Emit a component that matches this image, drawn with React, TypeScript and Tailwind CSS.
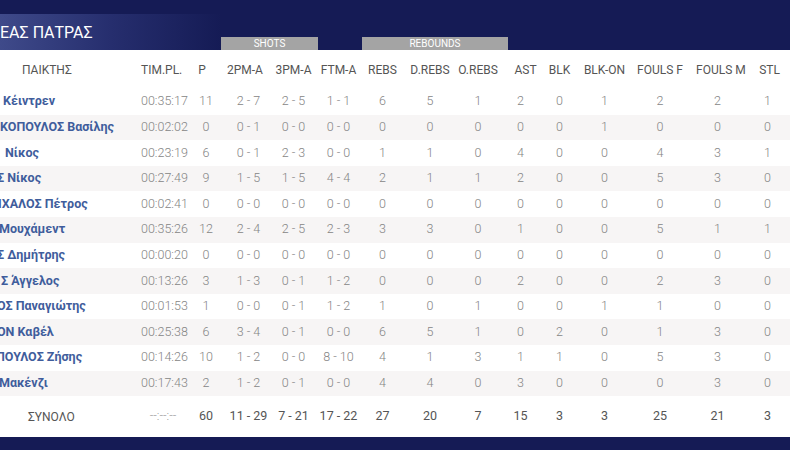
import React from 'react'

type Row = {
  name: string
  shift: string
  stats: string[]
}

const rows: Row[] = [
  { name: 'Κέιντρεν', shift: 'pl-[3px]', stats: ['00:35:17', '11', '2 - 7', '2 - 5', '1 - 1', '6', '5', '1', '2', '0', '1', '2', '2', '1'] },
  { name: 'ΚΟΠΟΥΛΟΣ Βασίλης', shift: 'pl-0', stats: ['00:02:02', '0', '0 - 1', '0 - 0', '0 - 0', '0', '0', '0', '0', '0', '1', '0', '0', '0'] },
  { name: 'Νίκος', shift: 'pl-[5px]', stats: ['00:23:19', '6', '0 - 1', '2 - 3', '0 - 0', '1', '1', '0', '4', '0', '0', '4', '3', '1'] },
  { name: 'Σ Νίκος', shift: '-ml-[3px]', stats: ['00:27:49', '9', '1 - 5', '1 - 5', '4 - 4', '2', '1', '1', '2', '0', '0', '5', '3', '0'] },
  { name: 'ΙΧΑΛΟΣ Πέτρος', shift: '-ml-[2px]', stats: ['00:02:41', '0', '0 - 0', '0 - 0', '0 - 0', '0', '0', '0', '0', '0', '0', '0', '0', '0'] },
  { name: 'Μουχάμεντ', shift: '-ml-[1px]', stats: ['00:35:26', '12', '2 - 4', '2 - 5', '2 - 3', '3', '3', '0', '1', '0', '0', '5', '1', '1'] },
  { name: 'Σ Δημήτρης', shift: '-ml-[3px]', stats: ['00:00:20', '0', '0 - 0', '0 - 0', '0 - 0', '0', '0', '0', '0', '0', '0', '0', '0', '0'] },
  { name: 'Σ Άγγελος', shift: 'pl-[1px]', stats: ['00:13:26', '3', '1 - 3', '0 - 1', '1 - 2', '0', '0', '0', '2', '0', '0', '2', '3', '0'] },
  { name: 'ΟΣ Παναγιώτης', shift: '-ml-[3px]', stats: ['00:01:53', '1', '0 - 0', '0 - 1', '1 - 2', '1', '0', '1', '0', '0', '1', '1', '0', '0'] },
  { name: 'ΟΝ Καβέλ', shift: '-ml-[3px]', stats: ['00:25:38', '6', '3 - 4', '0 - 1', '0 - 0', '6', '5', '1', '0', '2', '0', '1', '3', '0'] },
  { name: 'ΠΟΥΛΟΣ Ζήσης', shift: '-ml-[4px]', stats: ['00:14:26', '10', '1 - 2', '0 - 0', '8 - 10', '4', '1', '3', '1', '1', '0', '5', '3', '0'] },
  { name: 'Μακένζι', shift: '-ml-[1px]', stats: ['00:17:43', '2', '1 - 2', '0 - 1', '0 - 0', '4', '4', '0', '3', '0', '0', '0', '3', '0'] },
]

const totals = ['--:--:--', '60', '11 - 29', '7 - 21', '17 - 22', '27', '20', '7', '15', '3', '3', '25', '21', '3']

const headers: [string, string][] = [
  ['TIM.PL.', 'pr-[14px]'],
  ['P', 'pr-[8px]'],
  ['2PM-A', 'pr-[14px]'],
  ['3PM-A', ''],
  ['FTM-A', ''],
  ['REBS', ''],
  ['D.REBS', ''],
  ['O.REBS', ''],
  ['AST', 'pl-[10px]'],
  ['BLK', ''],
  ['BLK-ON', ''],
  ['FOULS F', ''],
  ['FOULS M', 'pl-[6px]'],
  ['STL', 'pl-[4px]'],
]

const cols = 'grid grid-cols-[141px_44px_42px_43px_47px_43px_45px_50px_46px_39px_39px_51px_60px_55px_45px]'

export default function App() {
  return (
    <div className="w-[790px] h-[450px] overflow-hidden bg-[#151b55] font-['Roboto',sans-serif] antialiased flex flex-col">
      {/* Team title + column groups */}
      <div className="h-[50px] flex flex-col justify-end">
        <div className="flex items-end h-[36px]">
          <div className="w-[221px] h-[36px] bg-gradient-to-r from-[#3f4a8a] via-[#262e6e] to-[#151b55] flex items-center">
            <span className="text-white text-[16px] leading-none pt-[1px]">ΕΑΣ ΠΑΤΡΑΣ</span>
          </div>
          <div className="w-[97px] h-[13px] bg-[#a4a4a4] text-white text-[10px] leading-[13px] text-center">SHOTS</div>
          <div className="w-[44px]" />
          <div className="w-[146px] h-[13px] bg-[#a4a4a4] text-white text-[10px] leading-[13px] text-center">REBOUNDS</div>
        </div>
      </div>

      {/* Table */}
      <div className="bg-white">
        <div className={`${cols} h-[39px] items-center text-[12px] text-[#555]`}>
          <div className="pl-[22px]">ΠΑΙΚΤΗΣ</div>
          {headers.map(([h, pad]) => (
            <div key={h} className={`text-center whitespace-nowrap ${pad}`}>{h}</div>
          ))}
        </div>

        {rows.map((r, i) => (
          <div key={i} className={`${cols} h-[25.6px] items-center ${i % 2 === 1 ? 'bg-[#f7f5f5]' : 'bg-white'}`}>
            <div className="overflow-hidden whitespace-nowrap">
              <div className={`${r.shift} text-[12.5px] font-bold text-[#3f5d9c]`}>{r.name}</div>
            </div>
            {r.stats.map((s, j) => (
              <div key={j} className="text-center whitespace-nowrap text-[12.5px] font-light text-[#858585]">{s}</div>
            ))}
          </div>
        ))}

        <div className={`${cols} h-[41px] items-center`}>
          <div className="pl-[28px] text-[12px] text-[#555]">ΣΥΝΟΛΟ</div>
          {totals.map((s, j) => (
            <div
              key={j}
              className={`text-center whitespace-nowrap text-[12.5px] ${j === 0 ? 'font-light text-[#999]' : 'text-[#555]'}`}
            >
              {s}
            </div>
          ))}
        </div>
      </div>

      <div className="flex-1 bg-[#151b55]" />
    </div>
  )
}
